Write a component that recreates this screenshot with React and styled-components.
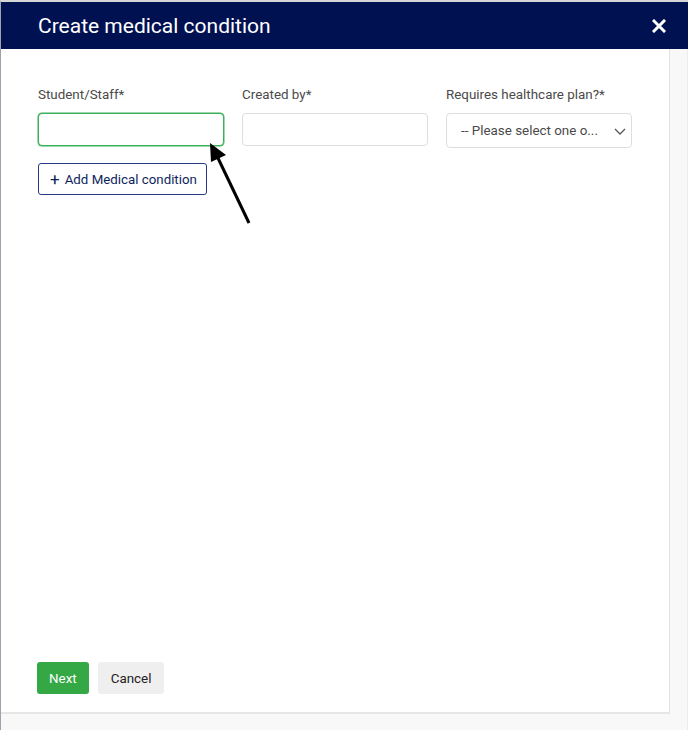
import React from 'react';
import styled, { createGlobalStyle } from 'styled-components';

const Global = createGlobalStyle`
  html, body { margin: 0; padding: 0; background: #f8f8f8; }
  body { font-family: Roboto, "Liberation Sans", sans-serif; }
`;

const Page = styled.div`
  width: 688px;
  height: 730px;
  display: flex;
  flex-direction: column;
  box-sizing: border-box;
  border-top: 2px solid #d6d6d6;
  border-left: 1px solid #9ea2ad;
  background: #f8f8f8;
  position: relative;
  overflow: hidden;
`;

const Header = styled.div`
  height: 47px;
  background: #001152;
  display: flex;
  align-items: center;
  justify-content: space-between;
  padding: 0 22px 0 37px;
  color: #fff;
  flex-shrink: 0;
`;

const Title = styled.h1`
  margin: 0;
  font-size: 21px;
  font-weight: 400;
`;

const Close = styled.button`
  border: none;
  background: none;
  padding: 0;
  color: #fff;
  display: flex;
  cursor: pointer;
`;

const Body = styled.div`
  display: flex;
  flex: 1;
`;

const Panel = styled.div`
  width: 669px;
  height: 665px;
  background: #fff;
  box-sizing: border-box;
  border-right: 1px solid #e2e2e2;
  border-bottom: 2px solid #e6e6e6;
  padding: 38px 36px 18px 37px;
  display: flex;
  flex-direction: column;
`;

const Fields = styled.div`
  display: grid;
  grid-template-columns: 186px 186px 186px;
  column-gap: 18px;
`;

const Field = styled.div`
  display: flex;
  flex-direction: column;
`;

const Label = styled.label`
  font-size: 13.4px;
  color: #4a4a4a;
  height: 17px;
  margin-bottom: 9px;
`;

const Input = styled.div`
  height: 33px;
  box-sizing: border-box;
  border: 1px solid ${p => (p.$focus ? '#3cb05a' : '#dedede')};
  box-shadow: ${p => (p.$focus ? '0 0 0 0.5px #3cb05a' : 'none')};
  border-radius: 4px;
  background: #fff;
`;

const Select = styled.div`
  height: 35px;
  box-sizing: border-box;
  border: 1px solid #dedede;
  border-radius: 4px;
  display: flex;
  align-items: center;
  justify-content: space-between;
  padding: 0 3px 0 14px;
  font-size: 13.4px;
  color: #4a4a4a;
`;

const AddButton = styled.button`
  margin-top: 15px;
  align-self: flex-start;
  height: 32px;
  padding: 0 9px 0 11px;
  border: 1px solid #243a86;
  border-radius: 3px;
  background: #fff;
  color: #0e1f5e;
  font-family: inherit;
  font-size: 13.3px;
  display: flex;
  align-items: center;
  gap: 5px;
`;

const Plus = styled.span`
  font-size: 17px;
  line-height: 1;
`;

const Spacer = styled.div`
  flex: 1;
`;

const Actions = styled.div`
  display: flex;
  gap: 9px;
  margin-left: -1px;
`;

const Btn = styled.button`
  height: 32px;
  border: none;
  border-radius: 3px;
  font-family: inherit;
  font-size: 13.4px;
  padding: 0 ${p => (p.$primary ? '12px' : '13px')};
  background: ${p => (p.$primary ? '#33a844' : '#efefef')};
  color: ${p => (p.$primary ? '#fff' : '#222')};
`;

const Side = styled.div`
  flex: 1;
  background: #f8f8f8;
  border-right: 1px solid #ececec;
`;

const Arrow = styled.svg`
  position: absolute;
  left: 200px;
  top: 136px;
  pointer-events: none;
`;

export default function App() {
  return (
    <>
      <Global />
      <Page>
        <Header>
          <Title>Create medical condition</Title>
          <Close aria-label="close">
            <svg width="14" height="14" viewBox="0 0 14 14">
              <path d="M2 2 L12 12 M12 2 L2 12" stroke="#fff" strokeWidth="3" strokeLinecap="square" />
            </svg>
          </Close>
        </Header>
        <Body>
          <Panel>
            <Fields>
              <Field>
                <Label>Student/Staff*</Label>
                <Input $focus />
              </Field>
              <Field>
                <Label>Created by*</Label>
                <Input />
              </Field>
              <Field>
                <Label>Requires healthcare plan?*</Label>
                <Select>
                  <span>-- Please select one o...</span>
                  <svg width="16" height="16" viewBox="0 0 16 16">
                    <path d="M3 6 L8 11 L13 6" fill="none" stroke="#555" strokeWidth="1.3" />
                  </svg>
                </Select>
              </Field>
            </Fields>
            <AddButton>
              <Plus>+</Plus>
              Add Medical condition
            </AddButton>
            <Spacer />
            <Actions>
              <Btn $primary>Next</Btn>
              <Btn>Cancel</Btn>
            </Actions>
          </Panel>
          <Side />
        </Body>
        <Arrow width="60" height="90" viewBox="0 0 60 90">
          <line x1="48" y1="85" x2="16" y2="18" stroke="#000" strokeWidth="3" />
          <polygon points="9,5 25,17 10,24" fill="#000" />
        </Arrow>
      </Page>
    </>
  );
}
